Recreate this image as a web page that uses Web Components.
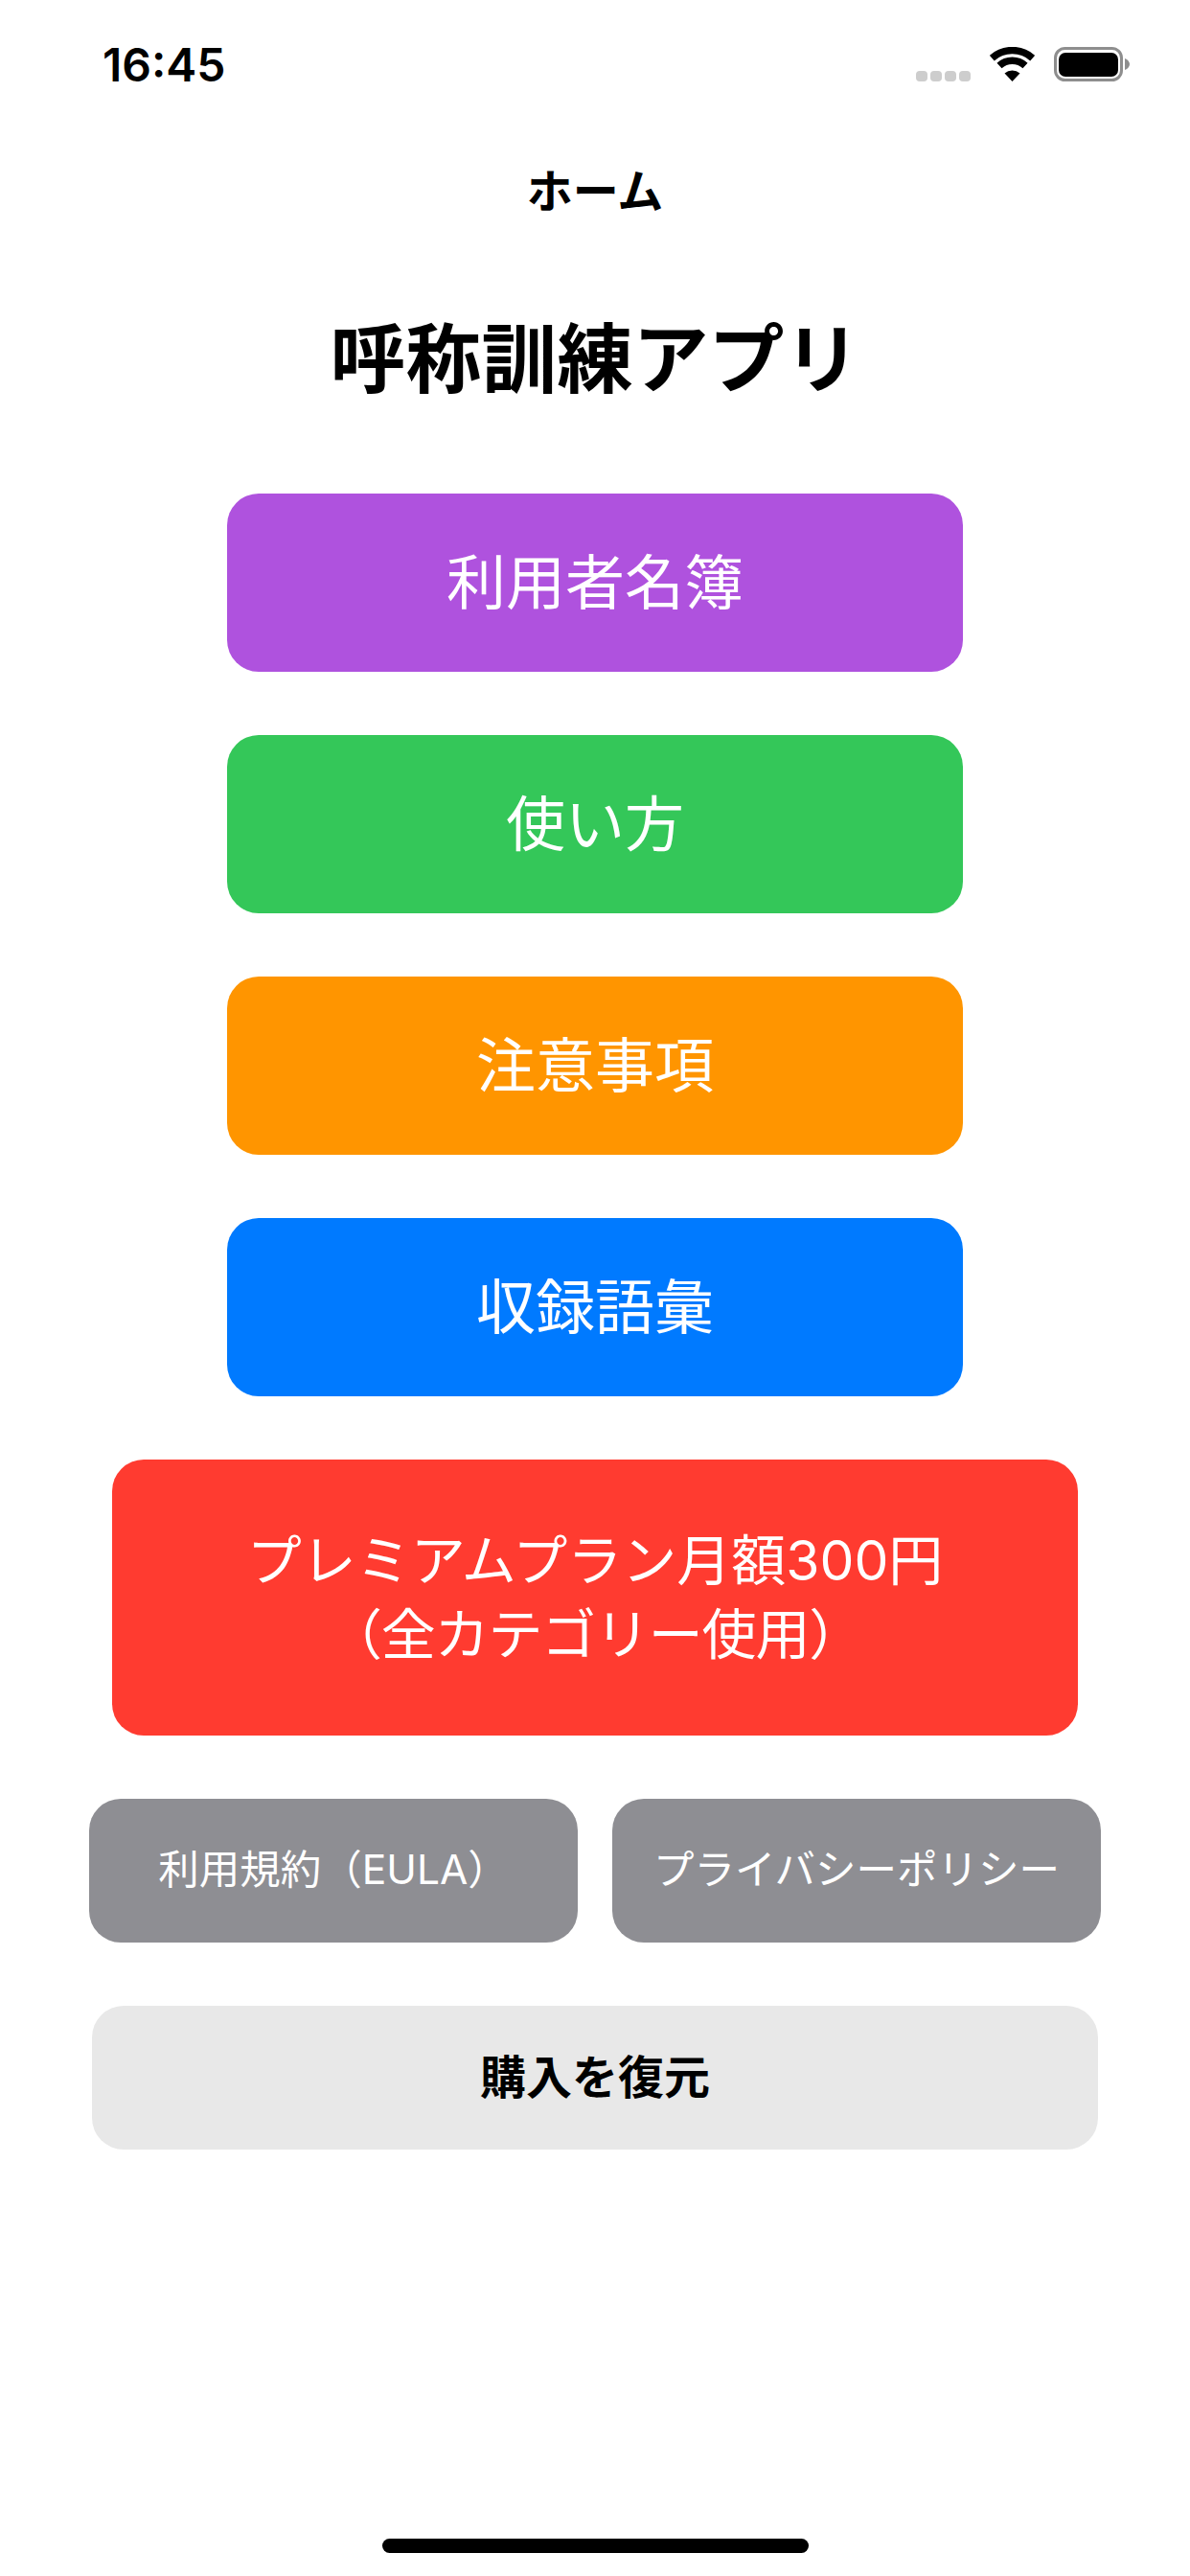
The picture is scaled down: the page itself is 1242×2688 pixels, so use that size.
<!DOCTYPE html>
<html lang="ja">
<head>
<meta charset="utf-8">
<title>ホーム</title>
<style>
    html, body { margin: 0; padding: 0; background: #fff; }
    body { font-family: Inter, "Noto Sans CJK JP", sans-serif; }
    .tight { letter-spacing: -1.2px; }
</style>
</head>
<body>
<home-screen>
    <status-bar slot="status" time="16:45"></status-bar>
    <nav-bar slot="nav">ホーム</nav-bar>
    <page-title slot="title">呼称訓練アプリ</page-title>

    <menu-button color="#af52de">利用者名簿</menu-button>
    <menu-button color="#34c759">使い方</menu-button>
    <menu-button color="#ff9500">注意事項</menu-button>
    <menu-button color="#007aff">収録語彙</menu-button>
    <menu-button color="#ff3b30" size="wide">プレミアムプラン月額300円<br><span class="tight">（全カテゴリー使用）</span></menu-button>

    <link-row>
        <menu-button color="#8e8e93" size="small">利用規約（EULA）</menu-button>
        <menu-button color="#8e8e93" size="small">プライバシーポリシー</menu-button>
    </link-row>

    <menu-button color="#e8e8e8" size="restore">購入を復元</menu-button>
</home-screen>

<script>
class HomeScreen extends HTMLElement {
    constructor()
    {
        super();
        this.attachShadow({ mode: 'open' });
        this.shadowRoot.innerHTML = `
            <style>
                :host { display: flex; flex-direction: column; width: 1242px; height: 2688px; background: #fff; overflow: hidden; }
                .actions { display: flex; flex-direction: column; align-items: center; gap: 66px; }
                .home-indicator { margin: auto auto 24px; width: 445px; height: 15px; border-radius: 7.5px; background: #000; }
            </style>
            <slot name="status"></slot>
            <slot name="nav"></slot>
            <slot name="title"></slot>
            <div class="actions"><slot></slot></div>
            <div class="home-indicator"></div>
        `;
    }
}

class StatusBar extends HTMLElement {
    constructor()
    {
        super();
        this.attachShadow({ mode: 'open' });
        this.shadowRoot.innerHTML = `
            <style>
                :host { display: flex; align-items: flex-start; justify-content: space-between; height: 132px; box-sizing: border-box; padding: 49px 63px 0 107px; }
                .time { margin-top: 1px; font: 600 48px/36px Inter, sans-serif; color: #000; }
                .icons { display: flex; align-items: flex-end; }
                .dots { display: flex; gap: 3px; margin-right: 20px; }
                .dots i { width: 12px; height: 11px; border-radius: 4px; background: #cdcdcd; }
                .wifi { display: block; margin-right: 20px; }
                .battery { display: block; }
            </style>
            <span class="time"></span>
            <div class="icons">
                <div class="dots"><i></i><i></i><i></i><i></i></div>
                <svg class="wifi" width="47" height="36" viewBox="0 0 47 36">
                    <path d="M2.3 11.6A32 32 0 0 1 44.7 11.6" fill="none" stroke="#000" stroke-width="7.5"/>
                    <path d="M10 19.6A20 20 0 0 1 37 19.6" fill="none" stroke="#000" stroke-width="7.5"/>
                    <path d="M23.5 36L15.5 27.6A12 12 0 0 1 31.5 27.6Z" fill="#000"/>
                </svg>
                <svg class="battery" width="79" height="36" viewBox="0 0 79 36">
                    <rect x="1.5" y="1.5" width="69" height="33" rx="10" fill="none" stroke="#8e8e8e" stroke-width="3"/>
                    <rect x="5" y="6" width="62" height="25" rx="7" fill="#000"/>
                    <path d="M74 12C77 13 79 15.5 79 18C79 20.5 77 23 74 24Z" fill="#8e8e8e"/>
                </svg>
            </div>
        `;
        this.shadowRoot.querySelector('.time').textContent = this.getAttribute('time');
    }
}

class NavBar extends HTMLElement {
    constructor()
    {
        super();
        this.attachShadow({ mode: 'open' });
        this.shadowRoot.innerHTML = `
            <style>
                :host { display: flex; align-items: center; justify-content: center; height: 128px; padding-bottom: 4px; font: 700 48px/1 "Noto Sans CJK JP", sans-serif; color: #000; }
            </style>
            <slot></slot>
        `;
    }
}

class PageTitle extends HTMLElement {
    constructor()
    {
        super();
        this.attachShadow({ mode: 'open' });
        this.shadowRoot.innerHTML = `
            <style>
                :host { display: block; padding: 62px 0 101px; text-align: center; font: 700 79px/88px "Noto Sans CJK JP", sans-serif; color: #000; }
            </style>
            <slot></slot>
        `;
    }
}

class MenuButton extends HTMLElement {
    constructor()
    {
        super();
        this.attachShadow({ mode: 'open' });
        this.shadowRoot.innerHTML = `
            <style>
                :host { display: flex; align-items: center; justify-content: center; box-sizing: border-box; width: 768px; height: 186px; padding-top: 1px; border-radius: 33px; background: var(--tone); color: #fff; text-align: center; font: 400 62px/75px Inter, "Noto Sans CJK JP", sans-serif; }
                :host([size="wide"]) { width: 1008px; height: 288px; padding-top: 0; font-size: 57px; line-height: 77px; }
                :host([size="small"]) { width: 510px; height: 150px; padding: 0 0 2px; font-size: 42.5px; line-height: 50px; }
                :host([size="restore"]) { width: 1050px; height: 150px; padding-top: 0; color: #000; font-size: 48px; font-weight: 700; line-height: 50px; }
            </style>
            <div class="label"><slot></slot></div>
        `;
        this.style.setProperty('--tone', this.getAttribute('color'));
    }
}

class LinkRow extends HTMLElement {
    constructor()
    {
        super();
        this.attachShadow({ mode: 'open' });
        this.shadowRoot.innerHTML = `
            <style>
                :host { display: flex; gap: 36px; }
            </style>
            <slot></slot>
        `;
    }
}

customElements.define('home-screen', HomeScreen);
customElements.define('status-bar', StatusBar);
customElements.define('nav-bar', NavBar);
customElements.define('page-title', PageTitle);
customElements.define('menu-button', MenuButton);
customElements.define('link-row', LinkRow);
</script>
</body>
</html>
